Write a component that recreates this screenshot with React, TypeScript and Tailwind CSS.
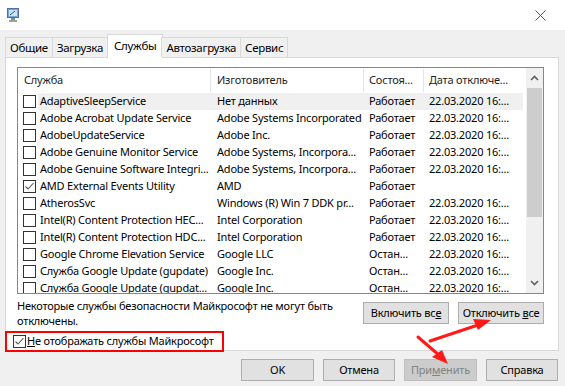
import React from "react";

type Row = { name: string; maker: string; state: string; date: string; checked?: boolean };

const rows: Row[] = [
  { name: "AdaptiveSleepService", maker: "Нет данных", state: "Работает", date: "22.03.2020 16:..." },
  { name: "Adobe Acrobat Update Service", maker: "Adobe Systems Incorporated", state: "Работает", date: "22.03.2020 16:..." },
  { name: "AdobeUpdateService", maker: "Adobe Inc.", state: "Работает", date: "22.03.2020 16:..." },
  { name: "Adobe Genuine Monitor Service", maker: "Adobe Systems, Incorpora...", state: "Работает", date: "22.03.2020 16:..." },
  { name: "Adobe Genuine Software Integri...", maker: "Adobe Systems, Incorpora...", state: "Работает", date: "22.03.2020 16:..." },
  { name: "AMD External Events Utility", maker: "AMD", state: "Работает", date: "", checked: true },
  { name: "AtherosSvc", maker: "Windows (R) Win 7 DDK pr...", state: "Работает", date: "22.03.2020 16:..." },
  { name: "Intel(R) Content Protection HEC...", maker: "Intel Corporation", state: "Работает", date: "22.03.2020 16:..." },
  { name: "Intel(R) Content Protection HDC...", maker: "Intel Corporation", state: "Работает", date: "22.03.2020 16:..." },
  { name: "Google Chrome Elevation Service", maker: "Google LLC", state: "Остан...", date: "22.03.2020 16:..." },
  { name: "Служба Google Update (gupdate)", maker: "Google Inc.", state: "Остан...", date: "22.03.2020 16:..." },
  { name: "Служба Google Update (gupdat...", maker: "Google Inc.", state: "Остан...", date: "22.03.2020 16:..." },
];

const tabs = ["Общие", "Загрузка", "Службы", "Автозагрузка", "Сервис"];

const CheckBox: React.FC<{ checked?: boolean }> = ({ checked }) => (
  <div className="w-[13px] h-[13px] shrink-0 border border-[#333333] bg-white flex items-center justify-center">
    {checked && (
      <svg width="11" height="11" viewBox="0 0 11 11">
        <path d="M1.5 5.5 L4 8 L9.5 2" fill="none" stroke="#555555" strokeWidth="1.1" />
      </svg>
    )}
  </div>
);

const Btn: React.FC<{ children: React.ReactNode; w: string; disabled?: boolean }> = ({ children, w, disabled }) => (
  <div
    className={`${w} h-[22px] flex items-center justify-center border ${
      disabled ? "bg-[#cccccc] border-[#bfbfbf] text-[#838383]" : "bg-[#e1e1e1] border-[#adadad] text-black"
    }`}
  >
    <span className="whitespace-pre">{children}</span>
  </div>
);

export default function App() {
  return (
    <div
      className="relative w-[565px] h-[386px] overflow-hidden bg-[#f0f0f0] text-[11px] tracking-[-0.2px] text-black flex flex-col"
      style={{ fontFamily: '"Segoe UI", "Noto Sans", sans-serif' }}
    >
      {/* Title bar */}
      <div className="h-[30px] bg-white flex items-center justify-between pl-[7px] pr-[19px] shrink-0">
        <svg width="12" height="14" viewBox="0 0 12 14">
          <rect x="0.5" y="0.5" width="11" height="9" fill="#6fa8dc" stroke="#4a6fa5" />
          <rect x="2" y="2" width="8" height="6" fill="#cfe2f3" />
          <path d="M3 7 L8 3" stroke="#2b5797" strokeWidth="1" />
          <rect x="4" y="10" width="4" height="2" fill="#8a8a8a" />
          <rect x="2" y="12" width="8" height="2" fill="#a0a0a0" />
        </svg>
        <svg width="11" height="11" viewBox="0 0 11 11">
          <path d="M0.5 0.5 L10.5 10.5 M10.5 0.5 L0.5 10.5" stroke="#555555" strokeWidth="1" />
        </svg>
      </div>

      {/* Tabs */}
      <div className="flex items-end pl-[5px] h-[27px] shrink-0 relative z-10 text-[11.5px] tracking-[-0.3px]">
        {tabs.map((t) =>
          t === "Службы" ? (
            <div
              key={t}
              className="h-[24px] -mb-px px-[6px] bg-white border border-b-0 border-[#d9d9d9] flex items-start pt-[2px] -mx-[1px]"
            >
              {t}
            </div>
          ) : (
            <div
              key={t}
              className="h-[20px] px-[4px] bg-[#f0f0f0] border border-b-0 border-[#d9d9d9] flex items-center -ml-px first:ml-0"
            >
              {t}
            </div>
          ),
        )}
      </div>

      {/* Panel */}
      <div className="ml-[5px] mr-[6px] h-[294px] bg-white border border-[#d9d9d9] shrink-0 flex flex-col pl-[11px] pr-[14px] pt-[9px]">
        {/* List */}
        <div className="h-[227px] border border-[#828790] flex overflow-hidden shrink-0">
          <div className="flex-1 flex flex-col overflow-hidden">
            <div className="h-[25px] flex shrink-0 text-[#1e1e1e] whitespace-nowrap">
              <div className="w-[193px] pl-[6px] flex items-center border-r border-[#e5e5e5] my-[1px]">Служба</div>
              <div className="w-[153px] pl-[6px] flex items-center border-r border-[#e5e5e5] my-[1px]">Изготовитель</div>
              <div className="w-[60px] pl-[5px] flex items-center border-r border-[#e5e5e5] my-[1px] overflow-hidden">Состоя...</div>
              <div className="flex-1 pl-[5px] flex items-center my-[1px] overflow-hidden">Дата отключе...</div>
            </div>
            {rows.map((r, i) => (
              <div key={r.name + i} className="h-[17px] flex items-center shrink-0 whitespace-nowrap">
                <div className="w-[20px] pl-[5px] shrink-0">
                  <CheckBox checked={r.checked} />
                </div>
                <div className={`flex-1 h-full flex items-center mr-[3px] ${i === 0 ? "bg-[#f0f0f0]" : ""}`}>
                  <div className="w-[173px] pl-[2px] overflow-hidden">{r.name}</div>
                  <div className="w-[153px] pl-[6px] overflow-hidden">{r.maker}</div>
                  <div className="w-[60px] pl-[5px] overflow-hidden">{r.state}</div>
                  <div className="flex-1 pl-[5px] overflow-hidden">{r.date}</div>
                </div>
              </div>
            ))}
          </div>
          {/* Scrollbar */}
          <div className="w-[17px] bg-[#f0f0f0] flex flex-col items-center shrink-0">
            <div className="h-[20px] flex items-center justify-center">
              <svg width="9" height="6" viewBox="0 0 9 6">
                <path d="M1 5 L4.5 1.5 L8 5" fill="none" stroke="#606060" strokeWidth="1.6" />
              </svg>
            </div>
            <div className="w-[15px] h-[129px] bg-[#cdcdcd]" />
            <div className="flex-1" />
            <div className="h-[20px] flex items-center justify-center">
              <svg width="9" height="6" viewBox="0 0 9 6">
                <path d="M1 1 L4.5 4.5 L8 1" fill="none" stroke="#606060" strokeWidth="1.6" />
              </svg>
            </div>
          </div>
        </div>

        {/* Info text + buttons */}
        <div className="flex justify-between mt-[3px] shrink-0">
          <div className="leading-[15px] pt-[1px] whitespace-nowrap">
            Некоторые службы безопасности Майкрософт не могут быть
            <br />
            отключены.
          </div>
          <div className="flex gap-[9px] pt-[5px]">
            <Btn w="w-[86px]">
              Включить вс<span className="underline">е</span>
            </Btn>
            <Btn w="w-[86px]">
              Отключить <span className="underline">в</span>се
            </Btn>
          </div>
        </div>

        {/* Hide MS services */}
        <div className="mt-[3px] -ml-[12px] w-[219px] h-[21px] border-2 border-[#ff0000] flex items-center pl-[6px] gap-[1px] shrink-0 whitespace-nowrap">
          <CheckBox checked />
          <span>
            <span className="underline">Н</span>е отображать службы Майкрософт
          </span>
        </div>
      </div>

      {/* Bottom buttons */}
      <div className="flex justify-end gap-[9px] pr-[7px] pt-[8px]">
        <Btn w="w-[73px]">OK</Btn>
        <Btn w="w-[72px]">Отмена</Btn>
        <Btn w="w-[73px]" disabled>
          При<span className="underline">м</span>енить
        </Btn>
        <Btn w="w-[72px]">Справка</Btn>
      </div>

      {/* Red annotation arrows */}
      <svg className="absolute left-0 top-0 pointer-events-none" width="565" height="386" viewBox="0 0 565 386">
        <path d="M430 341 L478 325" stroke="#ff1a1a" strokeWidth="3" strokeLinecap="round" />
        <polygon points="491,320 473,319 478,330" fill="#ff1a1a" />
        <path d="M418 337 L440 356" stroke="#ff1a1a" strokeWidth="3" strokeLinecap="round" />
        <polygon points="448,364 432,357 442,350" fill="#ff1a1a" />
      </svg>
    </div>
  );
}
